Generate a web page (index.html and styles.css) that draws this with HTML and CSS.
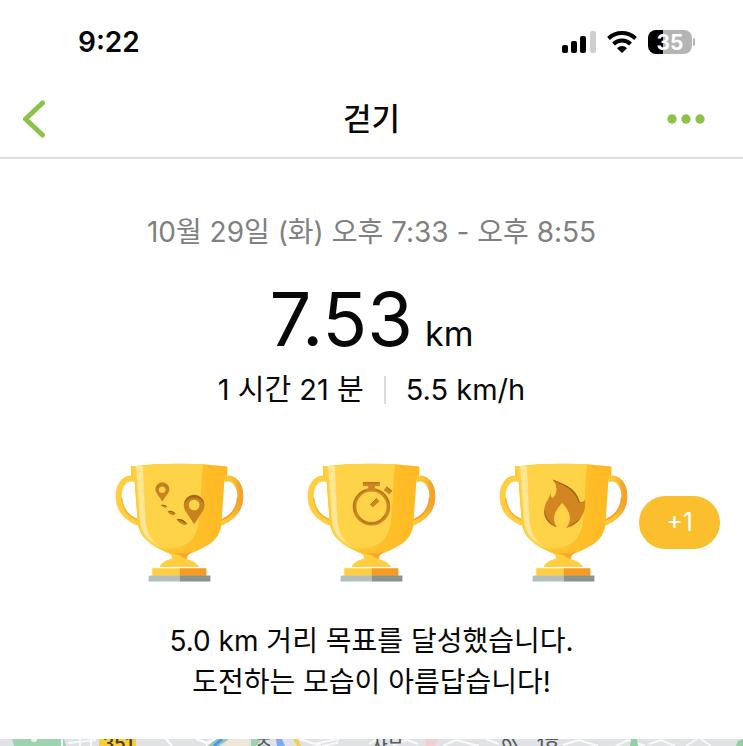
FILE: index.html
```html
<!DOCTYPE html>
<html lang="ko">
<head>
<meta charset="utf-8">
<meta name="viewport" content="width=device-width, initial-scale=1">
<title>걷기</title>
<link rel="stylesheet" href="styles.css">
</head>
<body>
<div class="status">
  <time class="clock">9:22</time>
  <div class="indicators">
    <svg class="signal" viewBox="0 0 34 22" aria-hidden="true">
      <rect x="0" y="14" width="6" height="8" rx="2"/>
      <rect x="9" y="10" width="6" height="12" rx="2"/>
      <rect x="18" y="5" width="6" height="17" rx="2"/>
      <rect class="dim" x="28" y="0" width="6" height="22" rx="2"/>
    </svg>
    <svg class="wifi" viewBox="0 0 30 22" aria-hidden="true">
      <path class="arc" d="M1.500 7.500a19.500 19.500 0 0 1 27 0"/>
      <path class="arc" d="M6.500 13a12.200 12.200 0 0 1 17 0"/>
      <path d="M10 17.200a7 7 0 0 1 10 0L15 22z"/>
    </svg>
    <div class="battery"><span class="level">35</span></div>
  </div>
</div>
<header class="bar">
  <button class="icon-button" aria-label="뒤로">
    <svg class="back" viewBox="0 0 24 38" aria-hidden="true"><path d="M20.500 3L3.500 19L20.500 35"/></svg>
  </button>
  <h1>걷기</h1>
  <button class="icon-button end" aria-label="더보기">
    <svg class="more" viewBox="0 0 38 10" aria-hidden="true"><circle cx="5" cy="5" r="4.700"/><circle cx="19" cy="5" r="4.700"/><circle cx="33" cy="5" r="4.700"/></svg>
  </button>
</header>
<main>
  <p class="date">10월 29일 (화) 오후 7:33 - 오후 8:55</p>
  <p class="distance"><span class="value">7.53</span><span class="unit">km</span></p>
  <p class="stats"><span>1 시간 21 분</span><span class="divider"></span><span>5.5 km/h</span></p>
  <div class="awards">
    <svg class="trophy" viewBox="40 30 400 375" role="img" aria-label="거리 목표">
      <defs>
        <linearGradient id="handle" x1="0" x2="1"><stop offset="0" stop-color="#ffcf45"/><stop offset=".6" stop-color="#fdbf30"/><stop offset="1" stop-color="#f3a227"/></linearGradient>
        <linearGradient id="cup" x1="0" x2="1"><stop offset="0" stop-color="#ffcb36"/><stop offset="1" stop-color="#ffb823"/></linearGradient>
        <clipPath id="bowl"><path d="M93 52Q238 34 385 52L383 80L376 82L366 226C361 278 318 296 268 316Q240 328 215 316C166 296 120 270 115 222L104 82L95 80Z"/></clipPath>
        <g id="cup-shape">
          <path d="M106 90C73 80 56 112 57 145C58 183 82 207 117 222" fill="none" stroke="#ffcd42" stroke-width="18"/>
          <path d="M66 147C68 180 86 202 116 213" fill="none" stroke="#f6b42f" stroke-width="5"/>
          <path d="M374 90C407 80 424 112 423 145C422 183 398 207 363 222" fill="none" stroke="url(#handle)" stroke-width="18"/>
          <path d="M415 145C413 180 394 202 366 213" fill="none" stroke="#f0a12b" stroke-width="5"/>
          <g clip-path="url(#bowl)">
            <rect x="85" y="35" width="310" height="290" fill="url(#cup)"/>
            <path d="M85 30H311L299 216C294 270 260 299 205 299C155 299 110 270 105 220Z" fill="#ffd348"/>
            <path d="M109 40H129L138 220C144 258 160 280 181 288C145 278 126 252 122 218Z" fill="#ffe596"/>
            <path d="M93 51L104 50L120 225C126 262 148 285 188 302L165 303L106 252Z" fill="#ffcb3d"/>
          </g>
          <path d="M204 308Q238 320 276 308Q260 322 263 333H218Q221 320 204 308Z" fill="#f7a928"/>
          <path d="M204 309L232 317C248 320 245 328 262 330C279 335 294 343 298 354H181C184 341 200 334 218 329Q219 318 204 309Z" fill="#ffcf40"/>
          <path d="M158 358H240V381H158Z" fill="#ffcf40"/>
          <path d="M240 358H321V381H240Z" fill="#f79a21"/>
          <path d="M147 380H240V398H147Z" fill="#b1bfc1"/>
          <path d="M240 380H333V398H240Z" fill="#899390"/>
        </g>
      </defs>
      <use href="#cup-shape"/>
      <g fill="#c9821f">
        <path fill-rule="evenodd" d="M188 157L171 132A21 21 0 1 1 206 132ZM188 112a10 10 0 1 0 .1 0Z"/>
        <path fill-rule="evenodd" d="M284 226L258 186A31 31 0 1 1 310 186ZM284 152a16 16 0 1 0 .1 0Z"/>
        <path d="M184 168Q195 165 203 173L197 176Q188 175 184 168ZM204 187Q217 182 229 194L222 199Q208 197 204 187ZM231 211Q250 207 264 226L255 228Q238 224 231 211Z"/>
        <path d="M168 121A21 21 0 0 1 208 121Q200 107 188 106Q176 107 168 121ZM253 168A31 31 0 0 1 315 168Q305 146 284 145Q263 146 253 168Z" fill="#a56820"/>
        <path d="M184 168Q195 165 203 173Q193 170 184 168ZM204 187Q217 182 229 194Q216 188 204 187ZM231 211Q250 207 264 226Q250 215 231 211Z" fill="#8b5a1c"/>
      </g>
    </svg>
    <svg class="trophy" viewBox="40 30 400 375" role="img" aria-label="시간 목표">
      <use href="#cup-shape"/>
      <g fill="none" stroke="#cd8722">
        <circle cx="240" cy="173" r="51" stroke-width="11"/>
        <path d="M214 105H265" stroke-width="12"/>
        <path d="M240 108V124" stroke-width="20"/>
        <path d="M281 118L298 131" stroke-width="14"/>
        <path d="M240 171L260 152" stroke-width="12"/>
      </g>
      <g fill="none" stroke="#a96d20" stroke-width="3">
        <path d="M190 191A53 53 0 0 1 225 122M255 122A53 53 0 0 1 292 160M203 205A45 45 0 0 0 280 198M214 101H265M284 113L302 126M236 167L256 148"/>
      </g>
    </svg>
    <svg class="trophy" viewBox="40 30 400 375" role="img" aria-label="칼로리 목표">
      <use href="#cup-shape"/>
      <path d="M207 91C236 103 277 116 286 151Q290 168 305 153C307 184 300 216 248 237C263 217 267 195 236 162C205 195 207 216 221 235C193 225 180 206 182 183C183 160 199 151 202 125Q198 137 206 147C224 136 222 107 207 91Z" fill="#d38620"/>
      <path d="M207 91C236 103 277 116 286 151Q290 168 305 153Q294 168 284 157C275 124 240 107 213 97ZM183 180Q185 211 214 231L221 235C193 225 178 203 183 180ZM248 237Q265 226 269 224Q285 215 294 203Q280 228 248 237Z" fill="#a5691d"/>
    </svg>
    <span class="extra">+1</span>
  </div>
  <p class="message">5.0 km 거리 목표를 달성했습니다.<br>도전하는 모습이 아름답습니다!</p>
</main>
<section class="map" aria-label="지도">
  <svg class="tiles" viewBox="0 0 743 7" preserveAspectRatio="xMidYMin slice" aria-hidden="true">
    <rect width="743" height="7" fill="#e1e2e6"/>
    <path d="M12 0H64L66 7H14Z" fill="#9fd3ad"/><circle cx="34" cy="0" r="3" fill="#f1f5f2"/>
    <path d="M62 0V7M68 4L96 1M80 0V7M91 0V7" stroke="#f8f8fa" stroke-width="2"/>
    <path d="M166 0L172 7M196 0L206 4L216 0M206 7L212 3" stroke="#fff" stroke-width="2" fill="none"/>
    <path d="M207 7L217 0H229L219 7Z" fill="#8ccbb0"/><path d="M214 7L222 0" stroke="#5794e5" stroke-width="3"/>
    <path d="M229 0H249V7H224Z" fill="#eee7d5"/>
    <path d="M251 0H262L256 7H251Z" fill="#9fd3ad"/>
    <path d="M276 0H282L285 7H277Z" fill="#80aaf0"/>
    <path d="M293 0H298L301 7H297Z" fill="#f3cf58"/>
    <path d="M299 0L321 7M314 5L338 0L337 4L322 7M369 5L378 0M393 6L407 1L418 5M443 7L456 1L479 7M486 0L499 5M563 6L579 1L598 7M616 7L628 1L645 7M649 5L661 1L675 7M686 7L697 0M701 0L711 7" fill="none" stroke="#f9f9fb" stroke-width="2"/>
    <path d="M425 0H438L435 7H426Z" fill="#f2cfd1"/>
    <path d="M631 0H637L638 7H630ZM738 2L743 0V7H736Z" fill="#92cfa3"/>
    <rect x="99" y="0" width="37" height="7" fill="#f6cf3c"/>
    <text class="route" x="118" y="11" text-anchor="middle">351</text>
    <g class="place">
      <text x="256" y="12">조</text>
      <text x="372" y="12">사무</text>
      <text x="506" y="14" transform="rotate(-30 506 14)">이</text>
      <text x="537" y="12">1호</text>
    </g>
  </svg>
</section>
</body>
</html>
```
FILE: styles.css
```css
* { box-sizing: border-box; }

body {
  margin: 0;
  min-height: 100vh;
  display: flex;
  flex-direction: column;
  background: #fff;
  color: #080808;
  font-family: Inter, "Noto Sans CJK KR", sans-serif;
}

p, h1 { margin: 0; }

.status {
  height: 80px;
  padding: 4px 48px 0 78px;
  display: flex;
  align-items: center;
  justify-content: space-between;
}

.clock { font-size: 28px; font-weight: 600; }

.indicators { display: flex; align-items: center; gap: 11px; }
.signal { width: 34px; height: 22px; }
.signal .dim { fill: #cfcfcf; }
.wifi { width: 30px; height: 22px; }
.wifi .arc { fill: none; stroke: #000; stroke-width: 4; }

.battery {
  position: relative;
  width: 44px;
  height: 24px;
  margin-right: 3px;
  border-radius: 8px;
  background: linear-gradient(90deg, #000 35%, #b5b5b5 35%);
  color: #fff;
  text-align: center;
}
.battery::after {
  content: "";
  position: absolute;
  left: 45px;
  top: 8px;
  width: 2px;
  height: 8px;
  border-radius: 0 2px 2px 0;
  background: #b5b5b5;
}
.level { display: block; font-size: 21px; line-height: 26px; font-weight: 700; }

.bar {
  height: 79px;
  padding: 0 38px 0 22px;
  display: grid;
  grid-template-columns: 1fr auto 1fr;
  align-items: center;
  border-bottom: 2px solid #dedede;
}
.bar h1 { padding: 0 16px 0 32px; font-size: 31px; line-height: 40px; font-weight: 500; }

.icon-button {
  justify-self: start;
  display: flex;
  align-items: center;
  padding: 0;
  border: 0;
  background: none;
  color: #8bc34a;
}
.icon-button.end { justify-self: end; }
.back { width: 24px; height: 38px; fill: none; stroke: currentColor; stroke-width: 5; stroke-linecap: round; stroke-linejoin: round; }
.more { width: 38px; height: 10px; fill: currentColor; }

main { text-align: center; padding-top: 53px; }

.date { color: #808080; font-size: 28px; line-height: 40px; }

.distance {
  display: flex;
  align-items: baseline;
  justify-content: center;
  gap: 12px;
  margin-top: 31px;
  line-height: 72px;
}
.value { font-size: 74px; }
.unit { font-size: 34px; }

.stats {
  display: flex;
  align-items: center;
  justify-content: center;
  gap: 20px;
  font-size: 29px;
  line-height: 40px;
}
.divider { width: 2px; height: 28px; background: #dcdcdc; }

.awards {
  position: relative;
  display: grid;
  grid-template-columns: repeat(3, 1fr);
  justify-items: center;
  margin-top: 49px;
  padding: 0 84px;
}
.trophy { width: 133px; height: 125px; }

.extra {
  position: absolute;
  right: 23px;
  top: 37px;
  width: 81px;
  height: 53px;
  border-radius: 27px;
  background: #fbbf2e;
  color: #fff;
  font-size: 25px;
  line-height: 53px;
}

.message { margin-top: 37px; padding-bottom: 36px; font-size: 28px; line-height: 41px; }

.map { height: 7px; overflow: hidden; }
.tiles { display: block; width: 100%; height: 7px; }
.route { font-size: 18px; font-weight: 600; fill: #4c3d0d; }
.place { font-size: 17px; font-weight: 500; fill: #555a60; }
```
